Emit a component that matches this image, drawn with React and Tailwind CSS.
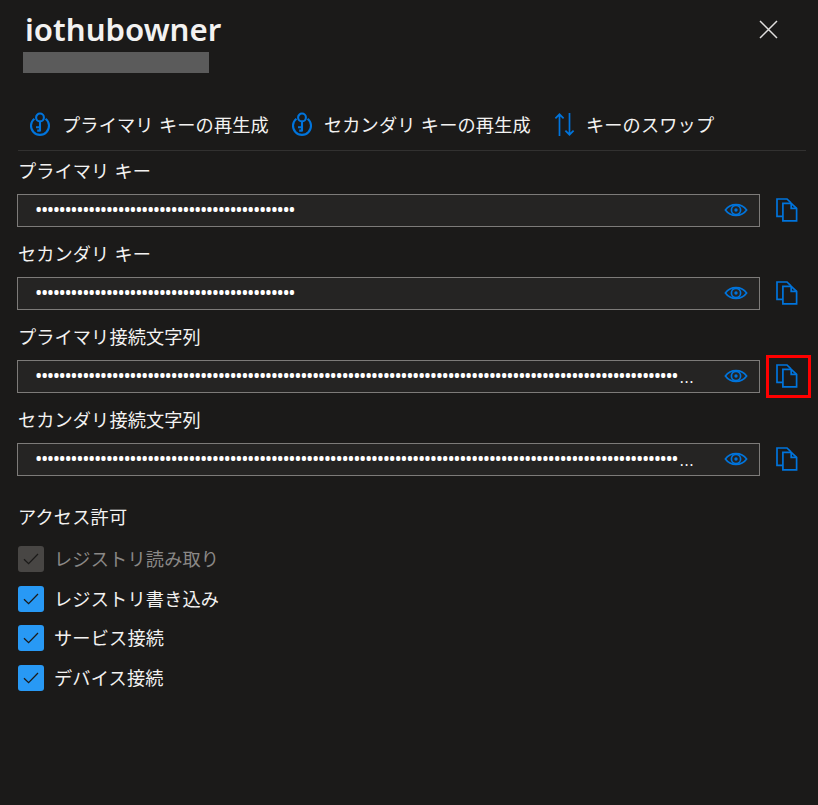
import { useState } from 'react';

const fields = [
  { id: 'primaryKey', label: 'プライマリ キー', dots: 44 },
  { id: 'secondaryKey', label: 'セカンダリ キー', dots: 44 },
  { id: 'primaryConn', label: 'プライマリ接続文字列', dots: 109, truncated: true, highlighted: true },
  { id: 'secondaryConn', label: 'セカンダリ接続文字列', dots: 109, truncated: true },
];

const initialPermissions = [
  { id: 'registryRead', label: 'レジストリ読み取り', checked: true, disabled: true },
  { id: 'registryWrite', label: 'レジストリ書き込み', checked: true },
  { id: 'service', label: 'サービス接続', checked: true },
  { id: 'device', label: 'デバイス接続', checked: true },
];

function KeyIcon() {
  return (
    <svg width="22" height="26" viewBox="0 0 22 26" fill="none" stroke="#0074dc" strokeWidth="2.1">
      <path d="M5.4 6.8A9 9 0 1 0 16.6 6.8" />
      <circle cx="11" cy="5.4" r="3.9" />
      <path d="M11 9.3V19.4M11 15.2H7M11 18.6H8.2" />
    </svg>
  );
}

function SwapIcon() {
  return (
    <svg width="22" height="26" viewBox="0 0 22 26" fill="none" stroke="#0074dc" strokeWidth="1.7">
      <path d="M5.5 24V2.5M1.4 6.4L5.5 2.3L9.6 6.4" />
      <path d="M15.5 1V22.5M11.4 18.6L15.5 22.7L19.6 18.6" />
    </svg>
  );
}

function EyeIcon() {
  return (
    <svg width="24" height="14" viewBox="0 0 24 14" fill="none" stroke="#0074dc" strokeWidth="1.7">
      <path d="M1.4 7C3.8 3.6 7.5 1.6 12 1.6S20.2 3.6 22.6 7C20.2 10.4 16.5 12.4 12 12.4S3.8 10.4 1.4 7Z" />
      <circle cx="12" cy="7" r="4.6" />
      <circle cx="12" cy="7" r="1.7" fill="#0074dc" stroke="none" />
    </svg>
  );
}

function CopyIcon() {
  return (
    <svg width="22" height="24" viewBox="0 0 22 24" fill="none" stroke="#0074dc" strokeWidth="1.7">
      <path d="M6.6 18.4H1V1H11L15 4.8" />
      <path d="M6.9 5.4H15.2L20.6 10.4V22.9H6.9Z" />
      <path d="M15.2 5.4V10.4H20.6" />
    </svg>
  );
}

function SecretField({ field }) {
  return (
    <div className="h-[83px]">
      <label className="flex h-[38px] items-center pb-[10px] pl-[1px]">{field.label}</label>
      <div className="flex items-center">
        <div className="flex h-[33px] w-[743px] items-center border border-[#7d7b79] bg-[#252423] pr-[11px] pb-[2px] pl-[17px]">
          <div className="flex flex-1 items-center whitespace-nowrap text-white">
            <span className="font-['Noto_Sans'] text-[19.5px] leading-[28px] tracking-[-1.44px]">{'•'.repeat(field.dots)}</span>
            {field.truncated && (
              <span className="pl-[2px] font-['Noto_Sans'] text-[20px] leading-[30px] font-light">…</span>
            )}
          </div>
          <button>
            <EyeIcon />
          </button>
        </div>
        <button
          className={`ml-[6px] flex h-[43px] w-[45px] -my-[5px] items-center justify-center border-[3px] pr-[3px] pb-[2px] ${
            field.highlighted ? 'border-[#ff0000]' : 'border-transparent'
          }`}
        >
          <CopyIcon />
        </button>
      </div>
    </div>
  );
}

export default function App() {
  const [permissions, setPermissions] = useState(initialPermissions);

  const toggle = (id) => {
    setPermissions(permissions.map((p) => (p.id === id ? { ...p, checked: !p.checked } : p)));
  };

  return (
    <div className="h-[805px] w-[818px] overflow-hidden bg-[#1b1a19] font-['Noto_Sans_CJK_JP',sans-serif] text-[18.2px] leading-[26px] tracking-[0.09px] text-[#f3f2f1] [word-spacing:1px]">
      {/* Header */}
      <div className="flex h-[100px] items-start justify-between pr-[40px] pl-[23px]">
        <div>
          <h1 className="h-[52px] pt-[9px] pl-[2px] font-['Noto_Sans'] text-[31.2px] leading-[40px] font-semibold tracking-normal">iothubowner</h1>
          <div className="h-[21px] w-[186px] bg-[#5b5b5b]" />
        </div>
        <button className="mt-[20px]">
          <svg width="19" height="19" viewBox="0 0 19 19" stroke="#e0dfde" strokeWidth="1.5">
            <path d="M1 1L18 18M18 1L1 18" />
          </svg>
        </button>
      </div>

      {/* Commands */}
      <div className="mr-[12px] ml-[18px] flex h-[51px] items-center border-b border-[#323130] pb-[1px] pl-[11px] tracking-[0.15px]">
        <button className="flex items-center gap-[11px] [word-spacing:1px]">
          <KeyIcon />
          <span className="-mt-[2px]">プライマリ キーの再生成</span>
        </button>
        <button className="ml-[22px] flex items-center gap-[11px] [word-spacing:1px]">
          <KeyIcon />
          <span className="-mt-[2px]">セカンダリ キーの再生成</span>
        </button>
        <button className="ml-[23px] flex items-center gap-[10px]">
          <SwapIcon />
          <span className="-mt-[2px]">キーのスワップ</span>
        </button>
      </div>

      <div className="pt-[5px] pl-[17px]">
        {fields.map((field) => (
          <SecretField key={field.id} field={field} />
        ))}
      </div>

      {/* Permissions */}
      <div className="pt-[15px] pl-[18px] tracking-[0.17px]">
        <div className="mb-[17px]">アクセス許可</div>
        <div className="flex flex-col gap-[13.7px]">
          {permissions.map((p) => (
            <button
              key={p.id}
              disabled={p.disabled}
              onClick={() => toggle(p.id)}
              className={`flex h-[26px] items-center gap-[10px] ${p.disabled ? 'text-[#8a8886]' : ''}`}
            >
              <span className={`flex size-[26px] items-center justify-center rounded-[3px] ${p.disabled ? 'bg-[#484644]' : 'bg-[#2899f5]'}`}>
                {p.checked && (
                  <svg width="16" height="12" viewBox="0 0 16 12" fill="none" stroke="#1b1a19" strokeWidth="1.3">
                    <path d="M1 6.2L5.6 10.6L15 1" />
                  </svg>
                )}
              </span>
              <span className="pb-[2px]">{p.label}</span>
            </button>
          ))}
        </div>
      </div>
    </div>
  );
}
